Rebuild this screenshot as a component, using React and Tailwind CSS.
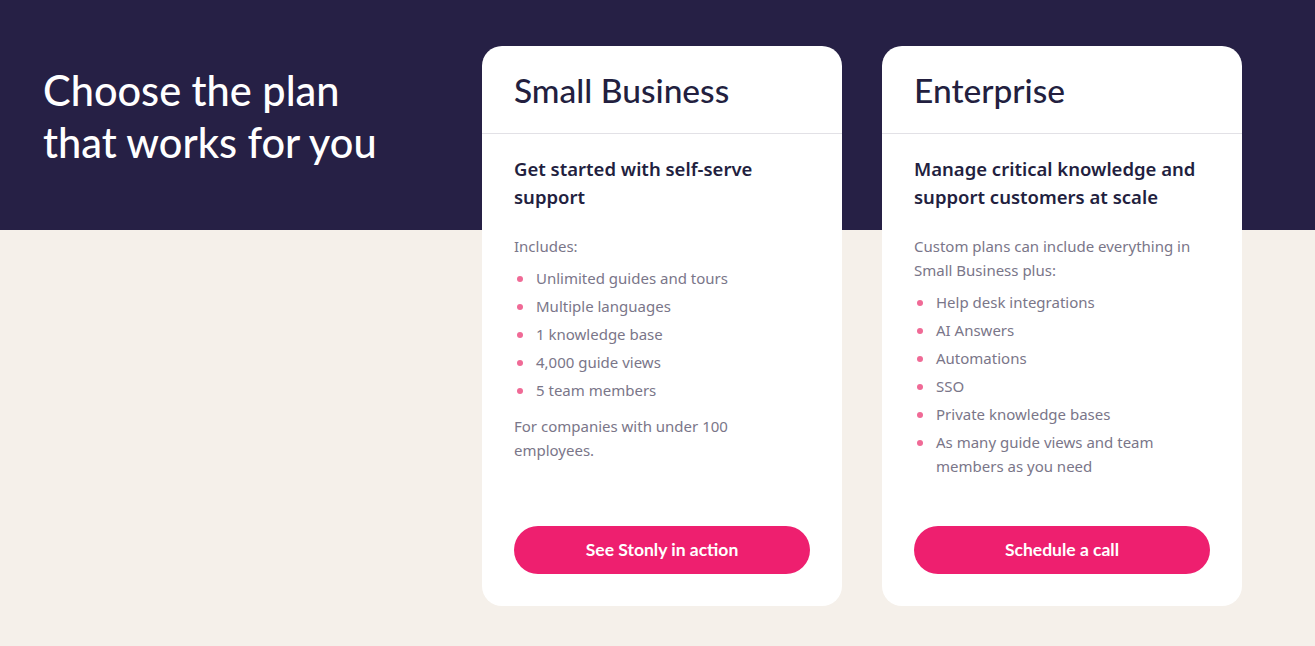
export default function App() {
  const sb = ["Unlimited guides and tours", "Multiple languages", "1 knowledge base", "4,000 guide views", "5 team members"];
  const ent = ["Help desk integrations", "AI Answers", "Automations", "SSO", "Private knowledge bases", "As many guide views and team members as you need"];
  const head = { fontFamily: "Lato, 'Noto Sans', sans-serif" };
  const body = { fontFamily: "'Noto Sans', 'Open Sans', sans-serif" };
  const Card = ({ title, sub, intro, items, outro, cta }) => (
    <div className="w-[360px] h-[560px] bg-white rounded-[20px] flex flex-col">
      <div className="h-[88px] border-b border-[#e2e1e6] px-8 pt-[24px]">
        <h2 className="text-[33.5px] leading-[40px] text-[#231f3f] font-medium" style={head}>{title}</h2>
      </div>
      <div className="flex-1 flex flex-col px-8 pt-[21px] pb-8" style={body}>
        <p className="text-[18.5px] leading-[28px] font-semibold text-[#231f3f] pr-3">{sub}</p>
        <p className="mt-[23px] text-[15px] leading-[24px] text-[#7a7689]">{intro}</p>
        <ul className="mt-[8px] flex flex-col">
          {items.map((t) => (
            <li key={t} className="flex text-[15px] leading-[24px] text-[#7a7689] mb-[4px]">
              <span className="w-[22px] shrink-0 flex pt-[10px] pl-[3px]">
                <span className="w-[6px] h-[6px] rounded-full bg-[#f06a96]"></span>
              </span>
              <span className="pr-6">{t}</span>
            </li>
          ))}
        </ul>
        {outro && <p className="mt-[8px] text-[15px] leading-[24px] text-[#7a7689] pr-16">{outro}</p>}
        <div className="flex-1"></div>
        <button className="h-12 w-full rounded-full bg-[#ee1f6f] text-white text-[17.5px] font-bold" style={head}>{cta}</button>
      </div>
    </div>
  );
  return (
    <div className="w-[1315px] h-[646px] bg-[#f5f0ea] relative overflow-hidden">
      <div className="h-[230px] bg-[#262045]"></div>
      <div className="absolute inset-0 flex">
        <div className="w-[482px] pl-[43px] pt-[64px]">
          <h1 className="text-[41.5px] leading-[52px] text-white font-medium" style={head}>Choose the plan<br />that works for you</h1>
        </div>
        <div className="flex gap-10 pt-[46px]">
          <Card title="Small Business" sub="Get started with self-serve support" intro="Includes:" items={sb} outro="For companies with under 100 employees." cta="See Stonly in action" />
          <Card title="Enterprise" sub="Manage critical knowledge and support customers at scale" intro="Custom plans can include everything in Small Business plus:" items={ent} cta="Schedule a call" />
        </div>
      </div>
    </div>
  );
}
